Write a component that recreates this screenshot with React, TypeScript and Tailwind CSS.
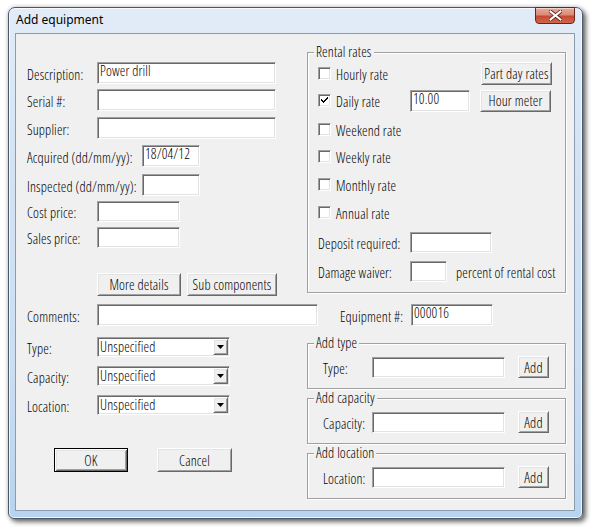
import type { ReactNode } from "react";

// classic win32 control looks
const sunken =
  "bg-white border border-t-[#a0a0a0] border-l-[#a0a0a0] border-b-white border-r-white shadow-[inset_1px_1px_0_#696969,inset_-1px_-1px_0_#e3e3e3]";
const raised =
  "flex items-center justify-center bg-[#f0f0f0] border border-t-white border-l-white border-b-[#696969] border-r-[#696969] shadow-[inset_1px_1px_0_#e3e3e3,inset_-1px_-1px_0_#a0a0a0]";
const etched = "relative border border-[#a0a0a0] shadow-[inset_1px_1px_0_#fff,1px_1px_0_#fff]";

function Field({ className, children }: { className: string; children?: ReactNode }) {
  return <div className={`${sunken} pl-[2px] leading-[15px] ${className}`}>{children}</div>;
}

function Button({ className, children }: { className: string; children: ReactNode }) {
  return <div className={`${raised} leading-[15px] ${className}`}>{children}</div>;
}

function Label({ className, children }: { className: string; children: ReactNode }) {
  return <span className={`shrink-0 pt-[2px] leading-[15px] ${className}`}>{children}</span>;
}

function Check({ checked = false }: { checked?: boolean }) {
  return (
    <div className={`${sunken} w-[13px] h-[13px] shrink-0 flex items-center justify-center`}>
      {checked && (
        <svg width="7" height="7" viewBox="0 0 7 7">
          <path d="M0 2h1v1h1v1h1V3h1V2h1V1h1V0h1v2H6v1H5v1H4v1H3v1H2V5H1V4H0z" fill="#000" />
        </svg>
      )}
    </div>
  );
}

function CheckRow({ label, checked }: { label: string; checked?: boolean }) {
  return (
    <div className="flex items-center">
      <Check checked={checked} />
      <Label className="ml-[5px]">{label}</Label>
    </div>
  );
}

function Combo({ className }: { className: string }) {
  return (
    <div className={`${sunken} flex h-[20px] ${className}`}>
      <span className="flex-1 pl-[2px] pt-[1px] leading-[15px]">Unspecified</span>
      <div className={`${raised} w-[15px] h-[16px] mt-[1px] mr-[1px]`}>
        <svg width="7" height="4" viewBox="0 0 7 4">
          <path d="M0 0h7L3.5 4z" fill="#000" />
        </svg>
      </div>
    </div>
  );
}

function Group({ title, className, children }: { title: string; className: string; children: ReactNode }) {
  return (
    <div className={`${etched} ${className}`}>
      <span className="absolute -top-[9px] left-[6px] bg-[#f0f0f0] px-[2px] leading-[15px]">{title}</span>
      {children}
    </div>
  );
}

function AddGroup({ title, label, className }: { title: string; label: string; className: string }) {
  return (
    <Group title={title} className={`h-[46px] ${className}`}>
      <div className="flex items-center mt-[12px] pl-[15px]">
        <Label className="w-[49px]">{label}</Label>
        <Field className="w-[133px] h-[21px]" />
        <Button className="ml-[13px] w-[31px] h-[22px]">Add</Button>
      </div>
    </Group>
  );
}

function CloseButton() {
  return (
    <div className="w-[40px] h-[17px] -mt-[1px] rounded-b-[4px] border border-[#6b2418] bg-[linear-gradient(180deg,#e9a899_0%,#dc8a77_45%,#c64a33_55%,#d0664e_100%)] shadow-[inset_0_1px_0_rgba(255,255,255,0.5)] flex items-center justify-center">
      <svg width="13" height="11" viewBox="0 0 13 11">
        <path
          d="M1.5 1.5l10 8M11.5 1.5l-10 8"
          stroke="#5b1f14"
          strokeWidth="3.6"
          strokeLinecap="square"
        />
        <path d="M1.5 1.5l10 8M11.5 1.5l-10 8" stroke="#fff" strokeWidth="2" strokeLinecap="square" />
      </svg>
    </div>
  );
}

export default function App() {
  return (
    <div className="w-[591px] h-[527px] bg-white pl-[8px] pt-[7px] font-['Open_Sans',sans-serif] [font-stretch:75%] font-light text-[14px] tracking-[0.15px] text-black">
      {/* window frame */}
      <div className="w-[575px] h-[512px] flex flex-col rounded-t-[7px] rounded-b-[6px] border border-[#4b5868] bg-[linear-gradient(180deg,#e2ecf8_0%,#d3e3f4_30%,#cbdef2_70%,#b8d3ee_100%)] shadow-[3px_3px_5px_rgba(0,0,0,0.55),0_0_4px_rgba(0,0,0,0.25),inset_0_0_0_1px_rgba(255,255,255,0.7)] pl-[6px] pr-[7px] pb-[7px]">
        {/* title bar */}
        <div className="h-[25px] shrink-0 flex items-start justify-between">
          <span className="pl-[1px] pt-[4px] font-['Noto_Sans',sans-serif] [font-stretch:normal] font-normal tracking-normal text-[12px] leading-[16px] text-black">
            Add equipment
          </span>
          <CloseButton />
        </div>

        {/* client area */}
        <div className="flex-1 border border-[#8b9cb0] bg-[#f0f0f0] pl-[11px]">
          {/* top: details + rental rates */}
          <div className="flex h-[244px] mt-[18px]">
            <div className="w-[280px] flex flex-col">
              <div className="flex items-center h-[22px] mt-[10px]">
                <Label className="w-[70px]">Description:</Label>
                <Field className="w-[179px] h-[22px]">Power drill</Field>
              </div>
              <div className="flex items-center h-[22px] mt-[5px]">
                <Label className="w-[70px]">Serial #:</Label>
                <Field className="w-[179px] h-[22px]" />
              </div>
              <div className="flex items-center h-[22px] mt-[6px]">
                <Label className="w-[70px]">Supplier:</Label>
                <Field className="w-[179px] h-[22px]" />
              </div>
              <div className="flex items-center h-[22px] mt-[6px]">
                <Label className="w-[115px]">Acquired (dd/mm/yy):</Label>
                <Field className="w-[58px] h-[22px]">18/04/12</Field>
              </div>
              <div className="flex items-center h-[22px] mt-[7px]">
                <Label className="w-[115px]">Inspected (dd/mm/yy):</Label>
                <Field className="w-[58px] h-[22px]" />
              </div>
              <div className="flex items-center h-[21px] mt-[5px]">
                <Label className="w-[70px]">Cost price:</Label>
                <Field className="w-[83px] h-[21px]" />
              </div>
              <div className="flex items-center h-[21px] mt-[5px]">
                <Label className="w-[70px]">Sales price:</Label>
                <Field className="w-[83px] h-[21px]" />
              </div>
              <div className="flex h-[23px] mt-[25px] pl-[70px] gap-[6px]">
                <Button className="w-[84px] h-[23px]">More details</Button>
                <Button className="w-[90px] h-[23px]">Sub components</Button>
              </div>
            </div>

            <Group title="Rental rates" className="w-[259px] h-[241px] flex flex-col pl-[10px]">
              <div className="flex items-center justify-between h-[23px] mt-[9px] pr-[13px]">
                <CheckRow label="Hourly rate" />
                <Button className="w-[71px] h-[23px]">Part day rates</Button>
              </div>
              <div className="flex items-center h-[23px] mt-[4px]">
                <div className="w-[92px]">
                  <CheckRow label="Daily rate" checked />
                </div>
                <Field className="w-[60px] h-[22px]">10.00</Field>
                <Button className="ml-[10px] w-[71px] h-[22px]">Hour meter</Button>
              </div>
              <div className="flex items-center h-[22px] mt-[6px]">
                <CheckRow label="Weekend rate" />
              </div>
              <div className="flex items-center h-[22px] mt-[5px]">
                <CheckRow label="Weekly rate" />
              </div>
              <div className="flex items-center h-[22px] mt-[6px]">
                <CheckRow label="Monthly rate" />
              </div>
              <div className="flex items-center h-[22px] mt-[6px]">
                <CheckRow label="Annual rate" />
              </div>
              <div className="flex items-center h-[21px] mt-[9px]">
                <Label className="w-[92px]">Deposit required:</Label>
                <Field className="w-[82px] h-[21px]" />
              </div>
              <div className="flex items-center h-[21px] mt-[8px]">
                <Label className="w-[92px]">Damage waiver:</Label>
                <Field className="w-[37px] h-[21px]" />
                <Label className="ml-[9px]">percent of rental cost</Label>
              </div>
            </Group>
          </div>

          {/* comments row */}
          <div className="flex items-center h-[22px] mt-[8px]">
            <Label className="w-[70px]">Comments:</Label>
            <Field className="w-[221px] h-[22px]" />
            <Label className="ml-[22px] w-[71px]">Equipment #:</Label>
            <Field className="w-[82px] h-[22px]">000016</Field>
          </div>

          {/* bottom: combos + add groups */}
          <div className="flex">
            <div className="w-[280px] flex flex-col">
              <div className="flex items-center h-[20px] mt-[11px]">
                <Label className="w-[70px]">Type:</Label>
                <Combo className="w-[133px]" />
              </div>
              <div className="flex items-center h-[20px] mt-[9px]">
                <Label className="w-[70px]">Capacity:</Label>
                <Combo className="w-[133px]" />
              </div>
              <div className="flex items-center h-[20px] mt-[9px]">
                <Label className="w-[70px]">Location:</Label>
                <Combo className="w-[133px]" />
              </div>
              <div className="flex h-[24px] mt-[33px] pl-[27px] gap-[29px]">
                <div className="w-[74px] h-[24px] flex items-center justify-center border border-black bg-[#f0f0f0] shadow-[inset_1px_1px_0_#fff,inset_-1px_-1px_0_#696969,inset_2px_2px_0_#e3e3e3,inset_-2px_-2px_0_#a0a0a0] leading-[15px]">
                  OK
                </div>
                <Button className="w-[75px] h-[24px]">Cancel</Button>
              </div>
            </div>

            <div className="flex flex-col">
              <AddGroup title="Add type" label="Type:" className="w-[259px] mt-[17px]" />
              <AddGroup title="Add capacity" label="Capacity:" className="w-[259px] mt-[9px]" />
              <AddGroup title="Add location" label="Location:" className="w-[259px] mt-[9px]" />
            </div>
          </div>
        </div>
      </div>
    </div>
  );
}
